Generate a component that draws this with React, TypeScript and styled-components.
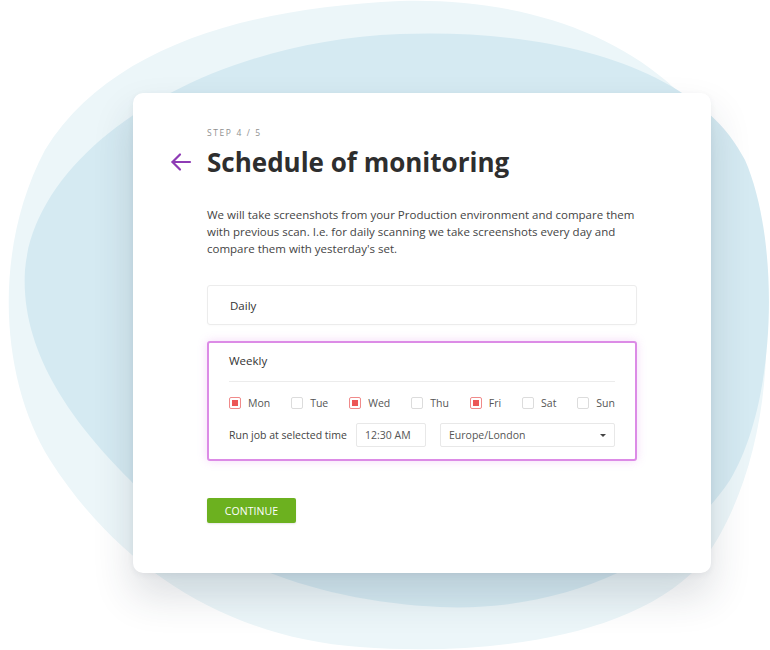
import React, { useState } from 'react'
import styled, { createGlobalStyle } from 'styled-components'

const GlobalStyle = createGlobalStyle`
    html, body {
        margin: 0;
        padding: 0;
        background: #ffffff;
    }
    body {
        font-family: 'Open Sans', 'Liberation Sans', sans-serif;
        color: #333;
    }
`

const Stage = styled.div`
    position: relative;
    width: 770px;
    height: 650px;
    overflow: hidden;
    padding: 93px 59px 0 133px;
    box-sizing: border-box;
`

const Blobs = styled.svg`
    position: absolute;
    left: 0;
    top: 0;
    z-index: 0;
`

const Card = styled.div`
    position: relative;
    z-index: 1;
    width: 578px;
    height: 480px;
    box-sizing: border-box;
    background: #fff;
    border-radius: 10px;
    box-shadow: 0 22px 40px rgba(40, 50, 70, 0.16), 0 2px 6px rgba(40, 50, 70, 0.06);
    padding: 34px 74px 0 37px;
    display: flex;
    gap: 15px;
`

const BackButton = styled.button`
    border: 0;
    background: none;
    padding: 0;
    margin-top: 24px;
    width: 22px;
    height: 22px;
    color: #8e3bb5;
    cursor: pointer;
    align-self: flex-start;
`

const Body = styled.div`
    flex: 1;
    display: flex;
    flex-direction: column;
`

const Step = styled.div`
    font-size: 8.5px;
    letter-spacing: 1.6px;
    color: #8f8f8f;
    line-height: 12px;
`

const Title = styled.h1`
    margin: 6px 0 0;
    font-size: 26px;
    font-weight: 700;
    color: #2e2e2e;
    line-height: 34px;
    letter-spacing: 0;
`

const Intro = styled.p`
    margin: 27px 0 0;
    font-size: 11.5px;
    line-height: 17px;
    color: #444;
    width: 440px;
`

const OptionBox = styled.div<{ active?: boolean }>`
    box-sizing: border-box;
    width: 430px;
    border-radius: 3px;
    background: #fff;
    border: ${({ active }) => (active ? '2px solid #dc8be6' : '1px solid #ececec')};
    box-shadow: ${({ active }) =>
        active ? '0 0 10px rgba(214, 120, 230, 0.28)' : '0 1px 2px rgba(0,0,0,0.02)'};
    padding: ${({ active }) => (active ? '8.5px 20px 12px' : '10.5px 22px')};
    margin-top: ${({ active }) => (active ? '16px' : '28px')};
`

const OptionTitle = styled.div`
    font-size: 11.5px;
    line-height: 17px;
    color: #333;
`

const Divider = styled.div`
    height: 1px;
    background: #ececec;
    margin: 12.5px 0 14px;
`

const DaysRow = styled.div`
    display: flex;
    justify-content: space-between;
    align-items: center;
`

const Day = styled.label`
    display: flex;
    align-items: center;
    gap: 7px;
    font-size: 10.5px;
    color: #555;
    line-height: 14px;
    cursor: pointer;
`

const Box = styled.span<{ checked: boolean }>`
    width: 12px;
    height: 12px;
    box-sizing: border-box;
    border-radius: 2px;
    border: 1px solid ${({ checked }) => (checked ? '#f08a8a' : '#dcdcdc')};
    display: flex;
    align-items: center;
    justify-content: center;
    &::after {
        content: '';
        width: 6px;
        height: 6px;
        background: ${({ checked }) => (checked ? '#ec5656' : 'transparent')};
    }
`

const TimeRow = styled.div`
    display: flex;
    align-items: center;
    margin-top: 13px;
`

const TimeLabel = styled.span`
    font-size: 10.5px;
    color: #444;
    width: 127px;
`

const Field = styled.div<{ width: number }>`
    box-sizing: border-box;
    width: ${({ width }) => width}px;
    height: 24px;
    border: 1px solid #e8e8e8;
    border-radius: 2px;
    display: flex;
    align-items: center;
    justify-content: space-between;
    padding: 0 8px;
    font-size: 10.5px;
    color: #555;
    margin-right: 14px;
    &:last-child {
        margin-right: 0;
    }
`

const Caret = styled.span`
    width: 0;
    height: 0;
    border-left: 3px solid transparent;
    border-right: 3px solid transparent;
    border-top: 3px solid #444;
`

const Continue = styled.button`
    margin-top: 37px;
    width: 89px;
    height: 25px;
    border: 0;
    border-radius: 2px;
    background: #6cb11f;
    color: #fff;
    font-family: 'Open Sans', 'Liberation Sans', sans-serif;
    font-size: 10.5px;
    letter-spacing: 0.1px;
    cursor: pointer;
    box-shadow: 0 1px 2px rgba(0,0,0,0.1);
`

const days = [
    { name: 'Mon', checked: true },
    { name: 'Tue', checked: false },
    { name: 'Wed', checked: true },
    { name: 'Thu', checked: false },
    { name: 'Fri', checked: true },
    { name: 'Sat', checked: false },
    { name: 'Sun', checked: false },
]

const App = () => {
    const [selected, setSelected] = useState(days)

    const toggle = (name: string) => {
        setSelected(selected.map((d) => (d.name === name ? { ...d, checked: !d.checked } : d)))
    }

    return (
        <Stage>
            <GlobalStyle />
            <Blobs width="770" height="650" viewBox="0 0 770 650">
                <path
                    fill="#ecf6f9"
                    d="M400 1 C570 -4 720 70 755 230 C780 340 765 480 700 565 C630 640 480 656 360 647 C230 638 120 570 50 460 C0 380 -8 250 45 150 C110 45 250 8 400 1 Z"
                />
                <path
                    fill="#d5eaf2"
                    d="M400 34 C560 28 700 70 745 160 C780 240 778 400 730 480 C670 570 550 612 440 607 C320 602 200 560 130 480 C70 420 20 350 25 270 C35 150 200 42 400 34 Z"
                />
            </Blobs>
            <Card>
                <BackButton aria-label="back">
                    <svg width="22" height="22" viewBox="0 0 22 22" fill="none" stroke="currentColor" strokeWidth="2.2" strokeLinecap="round" strokeLinejoin="round">
                        <path d="M20 11 H2.5" />
                        <path d="M10 3.5 L2.5 11 L10 18.5" />
                    </svg>
                </BackButton>
                <Body>
                    <Step>STEP 4 / 5</Step>
                    <Title>Schedule of monitoring</Title>
                    <Intro>
                        We will take screenshots from your Production environment and compare them
                        with previous scan. I.e. for daily scanning we take screenshots every day and
                        compare them with yesterday's set.
                    </Intro>
                    <OptionBox>
                        <OptionTitle>Daily</OptionTitle>
                    </OptionBox>
                    <OptionBox active>
                        <OptionTitle>Weekly</OptionTitle>
                        <Divider />
                        <DaysRow>
                            {selected.map((d) => (
                                <Day key={d.name} onClick={() => toggle(d.name)}>
                                    <Box checked={d.checked} />
                                    {d.name}
                                </Day>
                            ))}
                        </DaysRow>
                        <TimeRow>
                            <TimeLabel>Run job at selected time</TimeLabel>
                            <Field width={70}>12:30 AM</Field>
                            <Field width={175}>
                                Europe/London
                                <Caret />
                            </Field>
                        </TimeRow>
                    </OptionBox>
                    <Continue>CONTINUE</Continue>
                </Body>
            </Card>
        </Stage>
    )
}

export default App
